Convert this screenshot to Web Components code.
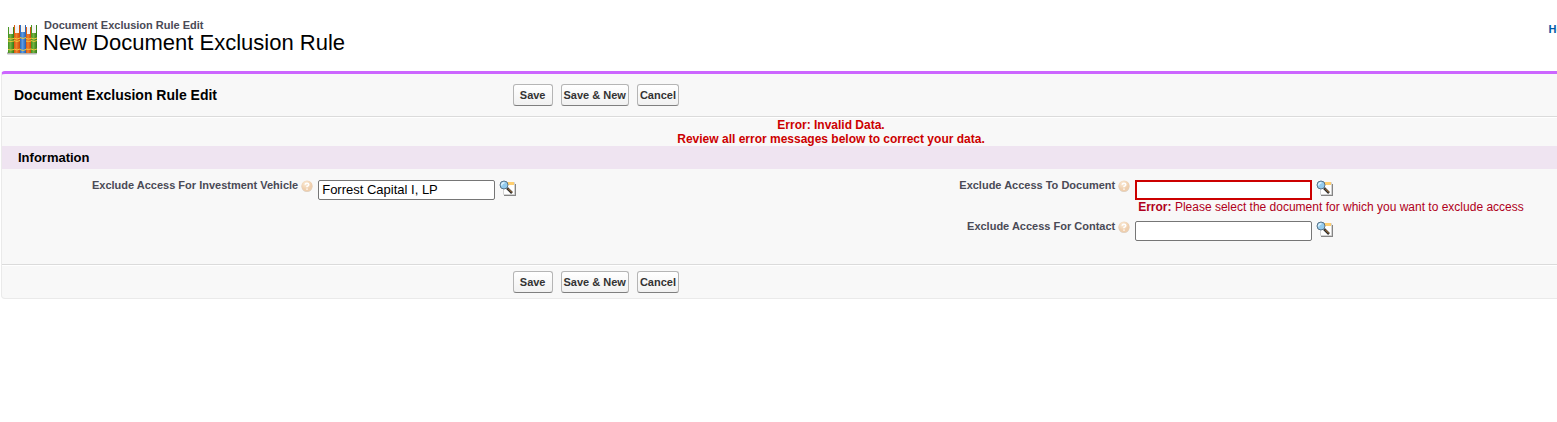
<!DOCTYPE html>
<html lang="en">
<head>
<meta charset="utf-8">
<title>New Document Exclusion Rule</title>
<style>
  body {
    margin: 0;
    overflow-x: hidden;
    background: #fff;
    color: #222;
    font: 12px/14px "Liberation Sans", Arial, sans-serif;
  }
</style>
</head>
<body>
<rule-page>
  <page-title slot="title" type="Document Exclusion Rule Edit" heading="New Document Exclusion Rule"></page-title>
  <page-block heading="Document Exclusion Rule Edit">
    <error-summary slot="error">Error: Invalid Data.<br>Review all error messages below to correct your data.</error-summary>
    <block-section heading="Information">
      <lookup-field label="Exclude Access For Investment Vehicle" value="Forrest Capital I, LP"></lookup-field>
      <lookup-field label="Exclude Access To Document" error="Please select the document for which you want to exclude access"></lookup-field>
      <lookup-field class="second" label="Exclude Access For Contact"></lookup-field>
    </block-section>
  </page-block>
</rule-page>

<script>
const define = (name, html, setup) => {
  const template = document.createElement('template');
  template.innerHTML = html;

  window.customElements.define(name, class extends HTMLElement {
    constructor() {
      super();
      this.attachShadow({ mode: 'open' });
      this.shadowRoot.appendChild(template.content.cloneNode(true));
    }

    connectedCallback() {
      if (setup) setup(this, this.shadowRoot);
    }
  });
};

// the detail area is wider than the window, the body clips the rest
define('rule-page', `
  <style>
    :host {
      display: block;
      box-sizing: border-box;
      width: calc(100% + 104px);
      padding: 18px 0 0 1px;
    }
    header {
      display: flex;
      justify-content: space-between;
      align-items: flex-start;
      height: 53px;
    }
  </style>
  <header>
    <slot name="title"></slot>
    <help-link></help-link>
  </header>
  <slot></slot>
`);

define('page-title', `
  <style>
    :host {
      display: flex;
      align-items: flex-start;
      gap: 5px;
      padding-left: 5px;
    }
    svg {
      display: block;
      margin-top: 5px;
    }
    h1 {
      margin: 0;
      padding-left: 1px;
      color: #4a4a56;
      font-size: 11px;
      line-height: 14px;
    }
    h2 {
      margin: 0;
      color: #000;
      font-size: 22px;
      font-weight: normal;
      line-height: 22px;
    }
  </style>
  <svg width="32" height="32" viewBox="0 0 32 32" aria-hidden="true">
    <defs>
      <linearGradient id="g"><stop offset="0" stop-color="#3f8f1c"/><stop offset=".4" stop-color="#74b343"/><stop offset="1" stop-color="#2f7a14"/></linearGradient>
      <linearGradient id="o"><stop offset="0" stop-color="#d9560e"/><stop offset=".4" stop-color="#f0812f"/><stop offset="1" stop-color="#cc4a08"/></linearGradient>
      <linearGradient id="b"><stop offset="0" stop-color="#2868bd"/><stop offset=".4" stop-color="#5c9be4"/><stop offset="1" stop-color="#2460b0"/></linearGradient>
    </defs>
    <rect x="1" y="29" width="30" height="2.500" rx="1" fill="#b4b4b4"/>
    <path fill="#f4f4f4" d="M2.500 4.500h5V13h-5zM7.500 2.500h6V13h-6zM13.500 2.500h6V13h-6zM19.500 4.500h5V13h-5zM24.500 2.500h6V13h-6z"/>
    <path fill="url(#g)" d="M2 4h1v7h4V4h1v26H2z"/>
    <path fill="url(#o)" d="M8 2h1v8h4V2h1v28H8z"/>
    <path fill="url(#b)" d="M14 2h1v7h4V2h1v28h-6z"/>
    <path fill="url(#o)" d="M20 4h1v7h3V4h1v26h-5z"/>
    <path fill="url(#g)" d="M25 2h1v8h4V2h1v28h-6z"/>
    <path fill="none" stroke="#efc93c" d="M2 15.500q3 1 6 0M8 15q3 2 6 0M14 14.500q3 2 6 0M20 15.500q2.500 1 5 0M25 15q3 2 6 0M2 18q3 1 6 0M8 17.500q3 2 6 0M20 18q2.500 1 5 0M25 17.500q3 2 6 0M2 26.500q3 1 6 0M8 26q3 2 6 0M14 26.500q3 2 6 0M20 26q2.500 1 5 0M25 26q3 2 6 0"/>
  </svg>
  <div>
    <h1></h1>
    <h2></h2>
  </div>
`, (el, root) => {
  root.querySelector('h1').textContent = el.getAttribute('type');
  root.querySelector('h2').textContent = el.getAttribute('heading');
});

define('help-link', `
  <style>
    :host {
      display: block;
      padding: 4px 19px 0 0;
      font-size: 11px;
      font-weight: bold;
    }
    a {
      color: #015ba7;
      text-decoration: none;
      white-space: nowrap;
    }
  </style>
  <a href="#">Help for this Page</a>
`);

define('button-row', `
  <style>
    :host {
      display: flex;
      gap: 8px;
    }
    button {
      box-sizing: border-box;
      height: 22px;
      margin: 0;
      padding: 0 2px;
      border: 1px solid #b5b5b5;
      border-bottom-color: #7f7f7f;
      border-radius: 3px;
      background: linear-gradient(#fff, #f1f1f1);
      color: #333;
      font: bold 11px/16px "Liberation Sans", Arial, sans-serif;
    }
    .save {
      padding: 0 6px;
    }
  </style>
  <button type="button" class="save">Save</button>
  <button type="button">Save &amp; New</button>
  <button type="button">Cancel</button>
`);

define('page-block', `
  <style>
    :host {
      display: block;
      box-sizing: border-box;
      border: 1px solid #eaeaea;
      border-top: 3px solid #c6f;
      border-radius: 4px;
      background: #f8f8f8;
    }
    .bar {
      display: grid;
      grid-template-columns: 30% 1fr;
      align-items: center;
      padding: 0 0 0 12px;
    }
    .top {
      height: 42px;
      border-bottom: 1px solid #dbdbdb;
      box-shadow: 0 1px #fff;
    }
    .bottom {
      height: 33px;
      border-top: 1px solid #dbdbdb;
      box-shadow: inset 0 1px #fff;
    }
    h2 {
      margin: 0;
      color: #000;
      font-size: 14px;
      line-height: 16px;
    }
    button-row {
      grid-column: 2;
      padding-left: 5px;
    }
  </style>
  <div class="bar top">
    <h2></h2>
    <button-row></button-row>
  </div>
  <slot name="error"></slot>
  <slot></slot>
  <div class="bar bottom">
    <button-row></button-row>
  </div>
`, (el, root) => {
  root.querySelector('h2').textContent = el.getAttribute('heading');
});

define('error-summary', `
  <style>
    :host {
      display: block;
      padding-top: 1px;
      color: #c00;
      font-weight: bold;
      text-align: center;
    }
  </style>
  <slot></slot>
`);

define('block-section', `
  <style>
    :host {
      display: block;
    }
    h3 {
      margin: 0;
      padding: 0 16px;
      background: #efe4f1;
      color: #000;
      font-size: 13px;
      line-height: 23px;
    }
    .fields {
      display: grid;
      grid-template-columns: 1fr 1fr;
      row-gap: 6px;
      padding: 11px 10px 23px 14px;
    }
    ::slotted(.second) {
      grid-column: 2;
    }
  </style>
  <h3></h3>
  <div class="fields"><slot></slot></div>
`, (el, root) => {
  root.querySelector('h3').textContent = el.getAttribute('heading');
});

define('lookup-field', `
  <style>
    :host {
      display: grid;
      grid-template-columns: 183fr 317fr;
      column-gap: 5px;
      align-items: start;
    }
    .label {
      display: flex;
      justify-content: flex-end;
      gap: 3px;
      color: #4a4a56;
      font-size: 11px;
      font-weight: bold;
      line-height: 10px;
      white-space: nowrap;
    }
    svg {
      display: block;
      flex: none;
    }
    .control {
      display: flex;
      gap: 4px;
    }
    input {
      box-sizing: border-box;
      width: 177px;
      height: 20px;
      margin: 0;
      padding: 0 3px 2px;
      border: 1px solid #767676;
      border-radius: 2px;
      background: #fff;
      color: #000;
      font: 13px/16px "Liberation Sans", Arial, sans-serif;
    }
    input.invalid {
      border: 2px solid #c00;
      border-radius: 0;
    }
    a {
      display: block;
    }
    .error {
      padding-left: 3px;
      color: #b00020;
      line-height: 15px;
      white-space: nowrap;
    }
  </style>
  <div class="label">
    <label for="field"></label>
    <svg width="12" height="12" viewBox="0 0 12 12" aria-hidden="true">
      <defs><radialGradient id="h" cx=".4" cy=".3"><stop offset="0" stop-color="#fbecd8"/><stop offset="1" stop-color="#efcfae"/></radialGradient></defs>
      <circle cx="6" cy="6.500" r="5.500" fill="#d8d2cc"/>
      <circle cx="6" cy="6" r="5.500" fill="url(#h)"/>
      <path fill="none" stroke="#fff" stroke-width="1.500" d="M4.200 4.800Q4.200 3.200 6 3.200T7.800 4.700Q7.800 5.600 6 6.500V7.300M6 8.400v1.400"/>
    </svg>
  </div>
  <div>
    <div class="control">
      <input id="field" type="text">
      <a href="#" aria-label="Lookup">
        <svg width="17" height="17" viewBox="0 0 17 17">
          <path fill="#858585" d="M5 4h12v12H5z"/>
          <path fill="#fff" stroke="#d2d2d2" d="M4.500 2.500h11v12h-11z"/>
          <path fill="#ffcf70" d="M8 2h7v3H8z"/>
          <path stroke="#2b2b2b" stroke-width="2.500" d="M8 8l5 5"/>
          <path stroke="#c98b45" stroke-width="1" d="M9 8.500l4 4"/>
          <circle cx="5" cy="5" r="4" fill="#93cbed" stroke="#5a7488"/>
          <path fill="none" stroke="#e0f4ff" stroke-width="1.500" d="M2.700 5.500Q2.500 2.800 5.500 2.700"/>
        </svg>
      </a>
    </div>
  </div>
`, (el, root) => {
  const input = root.querySelector('input');
  root.querySelector('label').textContent = el.getAttribute('label');
  input.value = el.getAttribute('value') || '';

  // show the message under the input
  if (el.hasAttribute('error')) {
    input.className = 'invalid';
    input.setAttribute('aria-invalid', 'true');
    input.setAttribute('aria-describedby', 'error');
    const error = document.createElement('div');
    error.id = 'error';
    error.className = 'error';
    error.innerHTML = '<strong>Error:</strong> ';
    error.append(el.getAttribute('error'));
    root.querySelector('.control').after(error);
  }
});
</script>
</body>
</html>
